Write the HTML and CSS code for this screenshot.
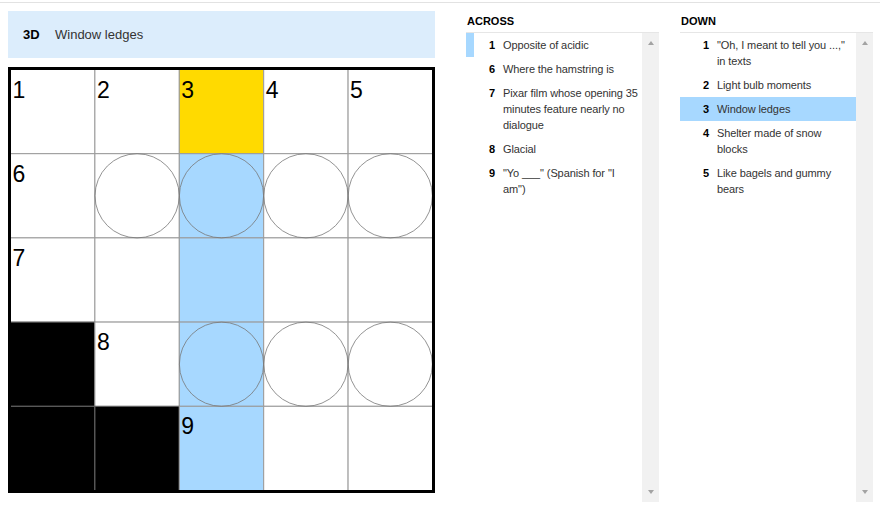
FILE: index.html
```html
<!DOCTYPE html>
<html lang="en">
<head>
<meta charset="utf-8">
<title>Crossword</title>
<link rel="stylesheet" href="styles.css">
</head>
<body>
<div class="page">
  <div class="board">
    <div class="clue-bar"><span class="bar-num">3D</span><span class="bar-text">Window ledges</span></div>
    <svg class="grid" width="427" height="426" viewBox="0 0 427 426" xmlns="http://www.w3.org/2000/svg">
      <g class="cells">
        <rect class="cell" x="2.5" y="2.5" width="84.4" height="84.2"/>
        <rect class="cell" x="86.9" y="2.5" width="84.4" height="84.2"/>
        <rect class="cell sel" x="171.3" y="2.5" width="84.4" height="84.2"/>
        <rect class="cell" x="255.7" y="2.5" width="84.4" height="84.2"/>
        <rect class="cell" x="340.1" y="2.5" width="84.4" height="84.2"/>

        <rect class="cell" x="2.5" y="86.7" width="84.4" height="84.2"/>
        <rect class="cell" x="86.9" y="86.7" width="84.4" height="84.2"/>
        <rect class="cell hl" x="171.3" y="86.7" width="84.4" height="84.2"/>
        <rect class="cell" x="255.7" y="86.7" width="84.4" height="84.2"/>
        <rect class="cell" x="340.1" y="86.7" width="84.4" height="84.2"/>

        <rect class="cell" x="2.5" y="170.9" width="84.4" height="84.2"/>
        <rect class="cell" x="86.9" y="170.9" width="84.4" height="84.2"/>
        <rect class="cell hl" x="171.3" y="170.9" width="84.4" height="84.2"/>
        <rect class="cell" x="255.7" y="170.9" width="84.4" height="84.2"/>
        <rect class="cell" x="340.1" y="170.9" width="84.4" height="84.2"/>

        <rect class="cell block" x="2.5" y="255.1" width="84.4" height="84.2"/>
        <rect class="cell" x="86.9" y="255.1" width="84.4" height="84.2"/>
        <rect class="cell hl" x="171.3" y="255.1" width="84.4" height="84.2"/>
        <rect class="cell" x="255.7" y="255.1" width="84.4" height="84.2"/>
        <rect class="cell" x="340.1" y="255.1" width="84.4" height="84.2"/>

        <rect class="cell block" x="2.5" y="339.3" width="84.4" height="84.2"/>
        <rect class="cell block" x="86.9" y="339.3" width="84.4" height="84.2"/>
        <rect class="cell hl" x="171.3" y="339.3" width="84.4" height="84.2"/>
        <rect class="cell" x="255.7" y="339.3" width="84.4" height="84.2"/>
        <rect class="cell" x="340.1" y="339.3" width="84.4" height="84.2"/>
      </g>
      <g class="circles">
        <circle cx="129.1" cy="128.8" r="42.1"/>
        <circle cx="213.5" cy="128.8" r="42.1"/>
        <circle cx="297.9" cy="128.8" r="42.1"/>
        <circle cx="382.3" cy="128.8" r="42.1"/>
        <circle cx="213.5" cy="297.2" r="42.1"/>
        <circle cx="297.9" cy="297.2" r="42.1"/>
        <circle cx="382.3" cy="297.2" r="42.1"/>
      </g>
      <g class="nums">
        <text x="4.5" y="30.5">1</text>
        <text x="88.9" y="30.5">2</text>
        <text x="173.3" y="30.5">3</text>
        <text x="257.7" y="30.5">4</text>
        <text x="342.1" y="30.5">5</text>
        <text x="4.5" y="114.7">6</text>
        <text x="4.5" y="198.9">7</text>
        <text x="88.9" y="283.1">8</text>
        <text x="173.3" y="367.3">9</text>
      </g>
      <rect class="frame" x="1.5" y="1.5" width="424" height="423"/>
    </svg>
  </div>

  <section class="clue-col">
    <h3 class="col-title">Across</h3>
    <div class="list-wrap">
      <ol class="clue-list">
        <li class="clue secondary"><span class="num">1</span><span class="txt">Opposite of acidic</span></li>
        <li class="clue"><span class="num">6</span><span class="txt">Where the hamstring is</span></li>
        <li class="clue"><span class="num">7</span><span class="txt">Pixar film whose opening 35<br>minutes feature nearly no<br>dialogue</span></li>
        <li class="clue"><span class="num">8</span><span class="txt">Glacial</span></li>
        <li class="clue"><span class="num">9</span><span class="txt">"Yo ___" (Spanish for "I<br>am")</span></li>
      </ol>
      <div class="scrollbar"><span class="arrow up"></span><span class="arrow down"></span></div>
    </div>
  </section>

  <section class="clue-col down">
    <h3 class="col-title">Down</h3>
    <div class="list-wrap">
      <ol class="clue-list">
        <li class="clue"><span class="num">1</span><span class="txt">"Oh, I meant to tell you ...,"<br>in texts</span></li>
        <li class="clue"><span class="num">2</span><span class="txt">Light bulb moments</span></li>
        <li class="clue active"><span class="num">3</span><span class="txt">Window ledges</span></li>
        <li class="clue"><span class="num">4</span><span class="txt">Shelter made of snow<br>blocks</span></li>
        <li class="clue"><span class="num">5</span><span class="txt">Like bagels and gummy<br>bears</span></li>
      </ol>
      <div class="scrollbar"><span class="arrow up"></span><span class="arrow down"></span></div>
    </div>
  </section>
</div>
</body>
</html>
```

FILE: styles.css
```css
html, body {
  margin: 0;
  padding: 0;
  background: #fff;
}

body {
  font-family: "Liberation Sans", Arial, sans-serif;
  color: #333;
}

.page {
  margin-top: 2px;
  border-top: 1px solid #e2e2e2;
  display: flex;
  padding-left: 8px;
}

.board {
  width: 427px;
  display: flex;
  flex-direction: column;
}

.clue-bar {
  margin-top: 8px;
  height: 47px;
  background: #dcedfc;
  display: flex;
  align-items: center;
  padding-left: 15px;
  font-size: 13px;
}

.bar-num {
  font-weight: bold;
  color: #000;
  width: 32px;
}

.bar-text {
  color: #333;
}

.grid {
  display: block;
  margin-top: 9px;
}

.cell {
  fill: #fff;
  stroke: #999;
  stroke-width: 1;
}

.cell.sel {
  fill: #ffda00;
}

.cell.hl {
  fill: #a7d8ff;
}

.cell.block {
  fill: #000;
  stroke: #666;
}

.circles circle {
  fill: none;
  stroke: #777;
  stroke-width: 0.8;
}

.nums text {
  font-family: "Liberation Sans", Arial, sans-serif;
  font-size: 23px;
  fill: #000;
}

.frame {
  fill: none;
  stroke: #000;
  stroke-width: 3;
}

.clue-col {
  width: 193px;
  margin-left: 31px;
  display: flex;
  flex-direction: column;
}

.clue-col.down {
  margin-left: 21px;
}

.col-title {
  margin: 0;
  font-size: 11px;
  font-weight: bold;
  text-transform: uppercase;
  line-height: 14px;
  color: #000;
  padding: 11px 0 4px 1px;
  border-bottom: 1px solid #e6e6e6;
}

.list-wrap {
  display: flex;
  height: 469px;
}

.clue-list {
  flex: 1;
  list-style: none;
  margin: 0;
  padding: 0;
}

.clue {
  display: flex;
  padding: 4px 0;
  line-height: 16px;
  font-size: 11px;
  border-left: 8px solid transparent;
}

.clue.secondary {
  border-left-color: #a7d8ff;
}

.clue.active {
  background: #a7d8ff;
}

.num {
  width: 21px;
  flex: none;
  text-align: right;
  font-weight: bold;
  color: #000;
  margin-right: 8px;
}

.txt {
  color: #333;
  white-space: nowrap;
  letter-spacing: -0.1px;
}

.scrollbar {
  width: 17px;
  flex: none;
  background: #f1f1f1;
  display: flex;
  flex-direction: column;
  justify-content: space-between;
  align-items: center;
  padding: 8px 0;
  box-sizing: border-box;
}

.arrow {
  width: 0;
  height: 0;
  border-left: 3.5px solid transparent;
  border-right: 3.5px solid transparent;
}

.arrow.up {
  border-bottom: 4px solid #a3a3a3;
}

.arrow.down {
  border-top: 4px solid #a3a3a3;
}
```
